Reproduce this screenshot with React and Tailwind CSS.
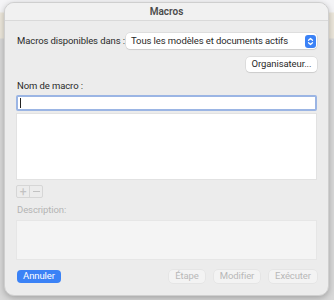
export default function App() {
  return (
    <div
      className="w-[334px] h-[300px] overflow-hidden pt-[2px] pl-[4px] pr-[5px] bg-[linear-gradient(to_bottom,#f4f4f6_0px,#f4f4f6_12px,#ece7db_13px,#ece7db_38px,#d8d8d8_39px,#d8d8d8_100%)]"
      style={{ fontFamily: 'Roboto, "Noto Sans", sans-serif' }}
    >
      <div className="h-[294px] rounded-[10px] border border-[#cfcfcf] bg-[#ececec] shadow-[0_2px_6px_rgba(0,0,0,0.25)] flex flex-col overflow-hidden">
        <div className="h-[18px] shrink-0 border-b border-[#d9d9d9] bg-[#f1f1f1] flex items-center justify-center text-[10px] font-semibold text-[#4b4b4b]">
          Macros
        </div>

        <div className="flex flex-col px-[11px] pt-[12px] text-[9.5px] text-[#2a2a2a] whitespace-nowrap tracking-[-0.1px]">
          <div className="flex items-center h-[16px]">
            <span className="w-[110px] shrink-0 pl-[1px]">Macros disponibles dans :</span>
            <div className="flex-1 h-[16px] rounded-[4px] bg-white shadow-[0_0_0_0.5px_rgba(0,0,0,0.12),0_1px_1px_rgba(0,0,0,0.08)] flex items-center justify-between pl-[5px] pr-[1px]">
              <span>Tous les modèles et documents actifs</span>
              <div className="w-[11px] h-[13px] rounded-[3px] bg-[#3b82f6] flex items-center justify-center">
                <svg width="7" height="9" viewBox="0 0 7 9" fill="none" stroke="white" strokeWidth="1.2" strokeLinecap="round" strokeLinejoin="round">
                  <path d="M1.5 3.3 L3.5 1.5 L5.5 3.3" />
                  <path d="M1.5 5.7 L3.5 7.5 L5.5 5.7" />
                </svg>
              </div>
            </div>
          </div>

          <div className="flex justify-end mt-[8px]">
            <div className="h-[15px] w-[71px] rounded-[4px] bg-white shadow-[0_0_0_0.5px_rgba(0,0,0,0.12),0_1px_1px_rgba(0,0,0,0.08)] flex items-center justify-center text-[#2a2a2a]">
              Organisateur...
            </div>
          </div>

          <div className="mt-[7px] pl-[1px] h-[14px] leading-[14px]">Nom de macro :</div>

          <div className="mt-[2px] h-[16px] bg-white border-[2px] border-[#9bb5e4] rounded-[2px] flex items-center pl-[2px]">
            <div className="w-[1px] h-[10px] bg-[#222]" />
          </div>

          <div className="mt-[2px] h-[67px] bg-white border border-[#e2e2e2]" />

          <div className="mt-[5px] flex w-[27px] h-[13px] border border-[#d6d6d6] rounded-[2px]">
            <div className="flex-1 flex items-center justify-center border-r border-[#d6d6d6] text-[#c2c2c2] text-[12px] leading-none">+</div>
            <div className="flex-1 flex items-center justify-center">
              <div className="w-[7px] h-[1px] bg-[#c2c2c2]" />
            </div>
          </div>

          <div className="mt-[5px] pl-[1px] h-[14px] leading-[14px] text-[#b4b4b4]">Description:</div>

          <div className="mt-[3px] h-[40px] bg-[#f4f4f4] border border-[#e6e6e6]" />

          <div className="mt-[10px] flex items-center">
            <div className="h-[13px] w-[44px] rounded-[4px] bg-[#3b82f6] text-white flex items-center justify-center ml-[1px]">Annuler</div>
            <div className="flex-1" />
            <div className="h-[13px] w-[36px] rounded-[4px] bg-[#f3f3f3] shadow-[0_0_0_0.5px_rgba(0,0,0,0.06)] text-[#b8b8b8] flex items-center justify-center">Étape</div>
            <div className="ml-[9px] h-[13px] w-[46px] rounded-[4px] bg-[#f3f3f3] shadow-[0_0_0_0.5px_rgba(0,0,0,0.06)] text-[#b8b8b8] flex items-center justify-center">Modifier</div>
            <div className="ml-[9px] h-[13px] w-[48px] rounded-[4px] bg-[#f3f3f3] shadow-[0_0_0_0.5px_rgba(0,0,0,0.06)] text-[#b8b8b8] flex items-center justify-center">Exécuter</div>
          </div>
        </div>
      </div>
    </div>
  );
}
